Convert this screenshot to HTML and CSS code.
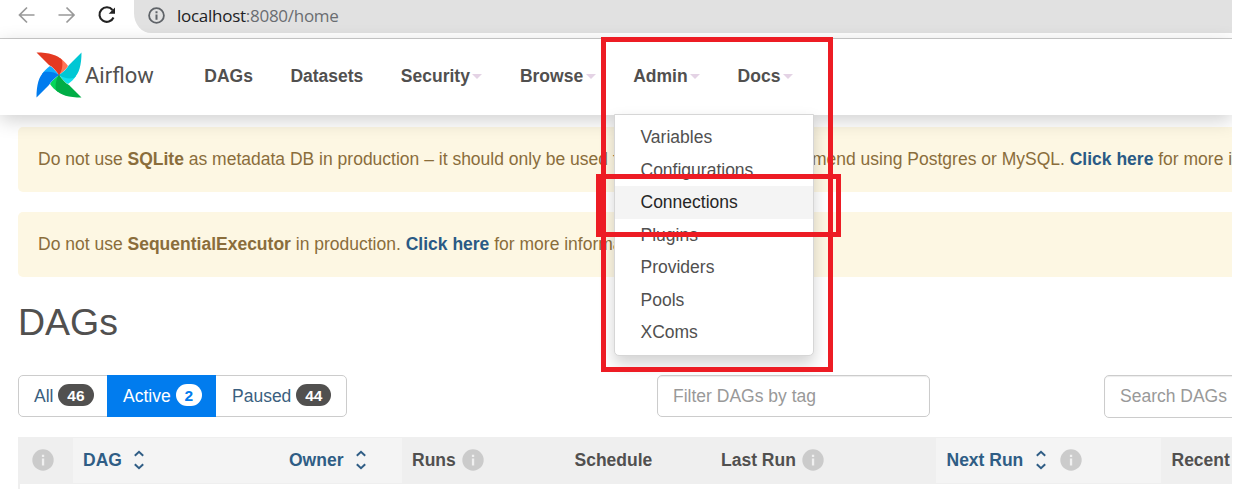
FILE: index.html
```html
<!DOCTYPE html>
<html lang="en">
<head>
<meta charset="utf-8">
<title>DAGs - Airflow</title>
<link rel="stylesheet" href="styles.css">
</head>
<body>
<svg class="defs" width="0" height="0">
  <symbol id="sort" viewBox="0 0 12 20"><path d="M1.800 5.800 6 1.800l4.200 4M1.800 14.200l4.200 4 4.200-4" fill="none" stroke="currentColor" stroke-width="2"/></symbol>
  <symbol id="info" viewBox="0 0 22 22"><circle cx="11" cy="11" r="10.700" fill="#cbcbcb"/><path d="M9.900 5.800h2.300V8H9.900zM9.900 9.500h2.300v7H9.900z" fill="#f0f0f0"/></symbol>
  <path id="blade-fold" d="M24 6C27 8 30 11 32 14C30 18 26 20 23 23Z"/>
  <path id="blade" d="M.5.500C13 .5 22 3 26 8C27 13 26 19 23 23C20 19 17 15 13 13Z"/>
</svg>
<div class="screen">
  <header class="browser">
    <svg class="arrows" width="100" height="20" viewBox="0 0 100 20" fill="none" stroke="#999" stroke-width="1.700"><path d="M16.500 10H2M9 2.500 1.500 10 9 17.500M40.500 10h15M48.500 2.500l7.500 7.500-7.500 7.500"/><path d="M94.500 5A7.300 7.300 0 1 0 95.500 12.500" stroke="#222" stroke-width="2.100"/><path d="M97 2.500v6.300h-6.300z" fill="#222" stroke="none"/></svg>
    <div class="address">
      <svg width="17" height="17" viewBox="0 0 17 17"><circle cx="8.500" cy="8.500" r="7.400" fill="none" stroke="#5f6368" stroke-width="1.800"/><path d="M7.500 4.300h2v2h-2zM7.500 7.500h2v5.300h-2z" fill="#5f6368"/></svg>
      <span class="url"><span class="host">localhost</span>:8080/home</span>
    </div>
  </header>
  <nav class="navbar">
    <div class="brand">
      <svg width="46" height="46" viewBox="0 0 46 46">
        <use href="#blade-fold" fill="#ff7557"/>
        <use href="#blade-fold" fill="#11e1ee" transform="rotate(90 23 23)"/>
        <use href="#blade-fold" fill="#04d659" transform="rotate(180 23 23)"/>
        <use href="#blade-fold" fill="#11acff" transform="rotate(270 23 23)"/>
        <use href="#blade" fill="#e43921"/>
        <use href="#blade" fill="#00c7d4" transform="rotate(90 23 23)"/>
        <use href="#blade" fill="#00ad46" transform="rotate(180 23 23)"/>
        <use href="#blade" fill="#017cee" transform="rotate(270 23 23)"/>
        <circle cx="23" cy="23" r=".8" fill="#51504f"/>
      </svg>
      <span class="brand-name">Airflow</span>
    </div>
    <a class="nav-item">DAGs</a>
    <a class="nav-item">Datasets</a>
    <a class="nav-item">Security<i class="caret"></i></a>
    <a class="nav-item">Browse<i class="caret"></i></a>
    <a class="nav-item">Admin<i class="caret"></i></a>
    <a class="nav-item">Docs<i class="caret"></i></a>
  </nav>
  <main class="content">
    <div class="alert">Do not use <b>SQLite</b> as metadata DB in production – it should only be used for dev/testing. We recommend using Postgres or MySQL. <b class="link">Click here</b> for more information.</div>
    <div class="alert">Do not use <b>SequentialExecutor</b> in production. <b class="link">Click here</b> for more information.</div>
    <h2 class="title">DAGs</h2>
    <div class="filters">
      <div class="tabs">
        <a class="tab all">All <span class="badge">46</span></a>
        <a class="tab active">Active <span class="badge">2</span></a>
        <a class="tab paused">Paused <span class="badge">44</span></a>
      </div>
      <div class="field tag-field">Filter DAGs by tag</div>
      <div class="field search-field">Search DAGs</div>
    </div>
    <div class="table">
      <div class="row">
        <div class="cell first"><svg class="info"><use href="#info"/></svg></div>
        <div class="cell sortable dag">DAG<svg class="sort"><use href="#sort"/></svg></div>
        <div class="cell sortable owner">Owner<svg class="sort"><use href="#sort"/></svg></div>
        <div class="cell runs">Runs<svg class="info"><use href="#info"/></svg></div>
        <div class="cell schedule">Schedule</div>
        <div class="cell last">Last Run<svg class="info"><use href="#info"/></svg></div>
        <div class="cell sortable next">Next Run<svg class="sort"><use href="#sort"/></svg><svg class="info"><use href="#info"/></svg></div>
        <div class="cell recent">Recent</div>
      </div>
    </div>
  </main>
  <div class="menu">
    <a>Variables</a>
    <a>Configurations</a>
    <a class="hover">Connections</a>
    <a>Plugins</a>
    <a>Providers</a>
    <a>Pools</a>
    <a>XComs</a>
  </div>
  <div class="highlight outer"></div>
  <div class="highlight inner"></div>
</div>
</body>
</html>
```
FILE: styles.css
```css
* { box-sizing: border-box; }
body { margin: 0; background: #fff; color: #51504f; font: 17.5px/25px "Liberation Sans", Arial, sans-serif; }
.defs { position: absolute; }
.screen { position: relative; width: 1232px; height: 489px; overflow: hidden; background: #fff; }
.browser { display: flex; height: 39px; border-bottom: 1px solid #ccc; }
.arrows { flex: none; margin: 5px 16px 0 18px; }
.address { flex: 1; display: flex; gap: 12px; height: 33px; padding: 7px 0 0 14px; border-radius: 0 0 0 17px / 0 0 0 20px; background: #e1e1e1; }
.address svg { flex: none; }
.url { font: 17px/18px "Open Sans", sans-serif; letter-spacing: -.27px; color: #6a6d71; white-space: nowrap; }
.host { color: #202124; }
.navbar { position: relative; z-index: 1; display: flex; align-items: center; height: 76px; padding-left: 36px; background: #fff; box-shadow: 0 5px 18px 0 rgba(0,0,0,.19); }
.brand { display: flex; align-items: center; width: 149.5px; padding-bottom: 4px; }
.brand svg { flex: none; }
.brand-name { margin-left: 3px; padding-top: 2px; font: 22px/28px Roboto, sans-serif; }
.nav-item { padding: 0 18.75px 2px; font-weight: bold; white-space: nowrap; }
.caret { display: inline-block; margin-left: 2.5px; border: 5px solid transparent; border-top-color: #e4d3e5; border-bottom: 0; vertical-align: middle; }
.content { width: 1300px; padding: 12px 0 0 18px; }
.alert { height: 65px; margin-bottom: 20px; padding: 19.5px 20px; border-radius: 5px; background: #fdf7e3; color: #8a6d3b; white-space: nowrap; }
.link { color: #2a5a85; }
.title { height: 48px; margin: 20px 0 30px; font-size: 37.5px; line-height: 50px; font-weight: normal; }
.filters { display: flex; align-items: flex-start; height: 62px; }
.tabs { display: flex; width: 329px; height: 42px; border: 1px solid #ccc; border-radius: 5px; }
.tab { height: 40px; padding: 7.5px 15px; color: #3b5f80; white-space: nowrap; }
.all { width: 88px; }
.active { width: 109px; height: 42px; margin-top: -1px; padding: 8.5px 16px; background: #017cee; color: #fff; }
.paused { padding-left: 16px; }
.badge { display: inline-block; height: 22px; padding: 0 9px; border-radius: 11px; background: #51504f; color: #fff; font-size: 15.5px; line-height: 23px; font-weight: bold; vertical-align: 1px; }
.active .badge { background: #fff; color: #017cee; }
.field { height: 42px; padding: 7.5px 15px; border: 1px solid #ccc; border-radius: 5px; box-shadow: inset 0 1px 1px rgba(0,0,0,.075); color: #999; }
.tag-field { width: 273px; margin-left: 310px; }
.search-field { width: 196px; height: 43px; margin-left: 174px; }
.table { height: 60px; border-left: 2px solid #efefef; }
.row { display: flex; height: 47px; margin-left: -1px; background: #efefef; }
.cell { display: flex; align-items: center; flex: none; padding-left: 10px; border: solid #efefef; border-width: 1px 0; font-weight: bold; white-space: nowrap; }
.sortable { background: #f4f4f4; color: #2f5d85; }
.info { flex: none; width: 22px; height: 22px; margin: 0 0 2px 6.5px; }
.sort { flex: none; width: 12px; height: 20px; margin: 0 0 2px 11.5px; }
.first { width: 54px; padding-left: 6.5px; }
.dag { width: 206px; }
.owner { width: 123px; }
.runs { width: 162px; }
.schedule { width: 147px; padding-left: 10.5px; }
.last { width: 225px; }
.next { width: 225px; padding-left: 10.5px; }
.next .info { margin-left: 13px; }
.recent { width: 120px; padding-left: 10.5px; }
.menu { position: absolute; z-index: 2; left: 614px; top: 114px; width: 200px; height: 242px; padding-top: 6px; border: 1px solid #d6d6d6; border-radius: 0 0 5px 5px; background: #fff; box-shadow: 0 7.5px 15px rgba(0,0,0,.175); }
.menu a { display: block; height: 32.5px; padding: 4px 25.5px; }
.menu .hover { background: #f4f4f4; color: #262626; }
.highlight { position: absolute; z-index: 3; border: 5px solid #ed1c24; }
.outer { left: 601px; top: 37px; width: 232px; height: 335px; }
.inner { left: 596px; top: 174px; width: 245px; height: 63px; }
```
